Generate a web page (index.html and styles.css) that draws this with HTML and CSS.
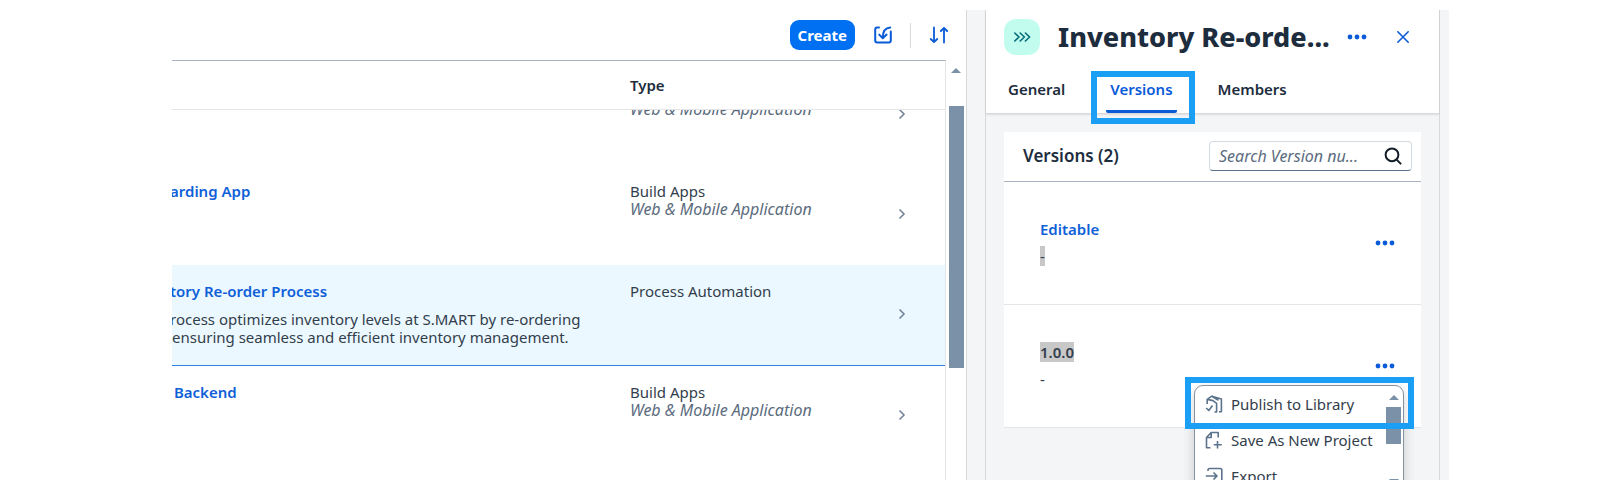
FILE: index.html
```
<!DOCTYPE html>
<html lang="en">
<head>
<meta charset="utf-8">
<title>Lobby</title>
<link rel="stylesheet" href="styles.css">
</head>
<body>
<main class="stage">
  <section class="projects">
    <div class="toolbar">
      <button class="create" type="button">Create</button>
      <button class="icon-button" type="button" aria-label="Import">
        <svg width="18" height="18" viewBox="0 0 18 18" fill="none" stroke="currentColor" stroke-width="2" stroke-linecap="round" stroke-linejoin="round"><path d="M5 1.5H3.2Q1.2 1.5 1.2 3.5V14.5Q1.2 16.5 3.2 16.5H14.8Q16.8 16.5 16.8 14.5V5.5"/><path d="M16.2 1.5Q8.8 2 8.8 11.8M5.2 8.6L8.8 12.2L12.6 8.6"/></svg>
      </button>
      <span class="separator"></span>
      <button class="icon-button" type="button" aria-label="Sort">
        <svg width="20" height="18" viewBox="0 0 20 18" fill="none" stroke="currentColor" stroke-width="1.8" stroke-linecap="round" stroke-linejoin="round"><path d="M5 1.5V16M1.8 13L5 16.2L8.2 13M15 16.5V2M11.8 5L15 1.8L18.2 5"/></svg>
      </button>
    </div>
    <div class="table-area">
      <div class="table-view">
        <table class="table">
          <colgroup><col><col class="col-type"><col class="col-nav"></colgroup>
          <thead>
            <tr><th></th><th>Type</th><th></th></tr>
          </thead>
          <tbody>
            <tr>
              <td></td>
              <td><div class="clip"><div class="cell scrolled">Build Apps<br><i>Web &amp; Mobile Application</i></div></div></td>
              <td><div class="clip"><div class="nav scrolled"><svg class="chevron" viewBox="0 0 8 12"><path d="M1.5 1.5L6 6L1.5 10.5"/></svg></div></div></td>
            </tr>
            <tr>
              <td><div class="cell name"><a href="#">arding App</a></div></td>
              <td><div class="cell">Build Apps<br><i>Web &amp; Mobile Application</i></div></td>
              <td><div class="nav"><svg class="chevron" viewBox="0 0 8 12"><path d="M1.5 1.5L6 6L1.5 10.5"/></svg></div></td>
            </tr>
            <tr class="selected">
              <td><div class="cell name"><a href="#">tory Re-order Process</a><p>rocess optimizes inventory levels at S.MART by re-ordering<br>ensuring seamless and efficient inventory management.</p></div></td>
              <td><div class="cell">Process Automation</div></td>
              <td><div class="nav"><svg class="chevron" viewBox="0 0 8 12"><path d="M1.5 1.5L6 6L1.5 10.5"/></svg></div></td>
            </tr>
            <tr>
              <td><div class="cell name"><a href="#">&nbsp;Backend</a></div></td>
              <td><div class="cell">Build Apps<br><i>Web &amp; Mobile Application</i></div></td>
              <td><div class="nav"><svg class="chevron" viewBox="0 0 8 12"><path d="M1.5 1.5L6 6L1.5 10.5"/></svg></div></td>
            </tr>
          </tbody>
        </table>
      </div>
      <div class="scrollbar">
        <span class="arrow-up"></span>
        <span class="thumb"></span>
      </div>
    </div>
  </section>

  <aside class="details">
    <header class="details-head">
      <div class="title-row">
        <span class="badge">
          <svg width="18" height="12" viewBox="0 0 18 12" fill="none" stroke="currentColor" stroke-width="1.6" stroke-linecap="round" stroke-linejoin="round"><path d="M1.8 2L6 6L1.8 10M7.2 2L11.4 6L7.2 10M12.4 2L16.6 6L12.4 10"/></svg>
        </span>
        <h1>Inventory Re-orde...</h1>
        <button class="icon-button more" type="button" aria-label="More"><svg width="20" height="6" viewBox="0 0 20 6" fill="currentColor"><circle cx="3" cy="3" r="2.4"/><circle cx="10" cy="3" r="2.4"/><circle cx="17" cy="3" r="2.4"/></svg></button>
        <button class="icon-button close" type="button" aria-label="Close"><svg width="14" height="14" viewBox="0 0 14 14" fill="none" stroke="currentColor" stroke-width="1.6" stroke-linecap="round"><path d="M1.8 1.8L12.2 12.2M12.2 1.8L1.8 12.2"/></svg></button>
      </div>
      <nav class="tabs">
        <a class="tab" href="#">General</a>
        <a class="tab active" href="#">Versions<span class="marker marker-tab"></span></a>
        <a class="tab" href="#">Members</a>
      </nav>
    </header>
    <div class="card">
      <div class="card-head">
        <h2>Versions (2)</h2>
        <label class="search">
          <input type="text" aria-label="Search versions" placeholder="Search Version nu...">
          <svg width="18" height="18" viewBox="0 0 18 18" fill="none" stroke="currentColor" stroke-width="2" stroke-linecap="round"><circle cx="8" cy="7.8" r="6.4"/><path d="M12.6 12.6L16.6 16.6"/></svg>
        </label>
      </div>
      <ul class="versions">
        <li class="version">
          <div class="version-text"><a href="#">Editable</a><span><mark>-</mark></span></div>
          <button class="icon-button" type="button" aria-label="More"><svg width="20" height="6" viewBox="0 0 20 6" fill="currentColor"><circle cx="3" cy="3" r="2.4"/><circle cx="10" cy="3" r="2.4"/><circle cx="17" cy="3" r="2.4"/></svg></button>
        </li>
        <li class="version">
          <div class="version-text"><strong><mark>1.0.0</mark></strong><span>-</span></div>
          <button class="icon-button" type="button" aria-label="More"><svg width="20" height="6" viewBox="0 0 20 6" fill="currentColor"><circle cx="3" cy="3" r="2.4"/><circle cx="10" cy="3" r="2.4"/><circle cx="17" cy="3" r="2.4"/></svg></button>
          <div class="menu">
            <div class="menu-items">
              <button type="button"><svg viewBox="0 0 18 18"><path d="M2.2 9V4.4L6.8 1.2L16.4 4V16.8H14M2.2 4.4L8 5.6L11.6 8.4V17H9.5M6.8 1.2L13.5 5.2M1.2 13L3.8 15.5L7.5 10.5"/></svg>Publish to Library</button>
              <button type="button"><svg viewBox="0 0 18 18"><path d="M5.5 16.8H1.5V6.5L6.2 1.5H13.2V6.5M1.8 6.5H6.2V1.8M12.5 10V17.5M8.8 13.8H16.8"/></svg>Save As New Project</button>
              <button type="button"><svg viewBox="0 0 18 18"><path d="M3 4V3Q3 1.5 4.5 1.5H15Q16.8 1.5 16.8 3V15Q16.8 16.5 15 16.5H4.5Q3 16.5 3 15V14M.8 9H12M8.5 5.5L12 9L8.5 12.5"/></svg>Export</button>
            </div>
            <div class="menu-scroll"><span class="arrow-up"></span><span class="menu-thumb"></span><span class="arrow-down"></span></div>
          </div>
          <span class="marker marker-menu"></span>
        </li>
      </ul>
    </div>
  </aside>
</main>
</body>
</html>
```
FILE: styles.css
```
* { box-sizing: border-box; }

body {
  margin: 0;
  padding: 10px 151px 10px 172px;
  background: #fff;
  color: #333e4c;
  font: 15px/18px "Noto Sans", "Open Sans", sans-serif;
}

button { font: inherit; cursor: pointer; }
a { color: #0f5fd8; font-weight: 600; text-decoration: none; }
h1, h2, p, ul { margin: 0; padding: 0; }
mark { background: #c8c8c8; color: inherit; }

.stage {
  display: flex;
  height: calc(100vh - 20px);
  background: #f4f5f7;
  overflow: hidden;
}

.projects {
  flex: 1;
  min-width: 0;
  display: flex;
  flex-direction: column;
  background: #fff;
  border-right: 1px solid #d9d9d9;
}

.toolbar {
  display: flex;
  align-items: center;
  justify-content: flex-end;
  height: 50px;
  padding-right: 17px;
}

.create {
  height: 30px;
  padding: 0 8px;
  border: 0;
  border-radius: 9px;
  background: #0070f2;
  color: #fff;
  font-weight: 700;
}

.icon-button {
  display: flex;
  padding: 0;
  border: 0;
  background: none;
  color: #0a5bd8;
}

.toolbar .icon-button:nth-of-type(2) { margin-left: 19px; }
.separator { width: 1px; height: 25px; margin: 0 18px; background: #d9d9d9; }

.table-area { display: flex; flex: 1; min-height: 0; }

.table-view {
  flex: 1;
  border-top: 1px solid #a8b3c3;
  border-right: 1px solid #e5e5e5;
  overflow: hidden;
}

.table {
  width: 100%;
  table-layout: fixed;
  border-collapse: separate;
  border-spacing: 0;
}

.col-type { width: 229px; }
.col-nav { width: 86px; }

.table th {
  height: 49px;
  padding: 0;
  border-bottom: 1px solid #e5e5e5;
  color: #1d2d3e;
  font-weight: 600;
  text-align: left;
}

.table td { padding: 0; vertical-align: top; }
.cell { height: 100px; padding-top: 17px; white-space: nowrap; overflow: hidden; }
.cell i { color: #5b6b7d; font-size: 16px; }
.name { text-indent: -2px; }
.name p { margin-top: 10px; }
.clip { height: 55px; overflow: hidden; }
.scrolled { margin-top: -45px; }
.nav { display: flex; align-items: center; justify-content: center; height: 98px; }
.chevron { width: 8px; height: 12px; fill: none; stroke: #75859a; stroke-width: 1.6; }
.selected { background: #ebf8ff; }
.selected td { border-bottom: 1px solid #2f80e0; }

.scrollbar { width: 20px; display: flex; flex-direction: column; align-items: center; padding-top: 8px; }
.arrow-up { width: 0; height: 0; border: 5px solid transparent; border-top: 0; border-bottom-color: #7b91a8; }
.arrow-down { width: 0; height: 0; border: 5px solid transparent; border-bottom: 0; border-top-color: #7b91a8; }
.thumb { width: 15px; height: 262px; margin-top: 33px; background: #7b91a8; }

.details {
  width: 455px;
  margin: 0 9px 0 18px;
  border: solid #d9d9d9;
  border-width: 0 1px;
}

.details-head {
  background: #fff;
  border-bottom: 1px solid #d9d9d9;
  box-shadow: 0 1px 2px #0000001a;
}

.title-row { display: flex; align-items: center; height: 54px; padding: 0 29px 0 18px; }

.badge {
  display: flex;
  align-items: center;
  justify-content: center;
  width: 36px;
  height: 36px;
  border-radius: 12px;
  background: #c2fcee;
  color: #046c7a;
}

h1 { flex: 1; margin-left: 18px; color: #1d2d3e; font-size: 27px; font-weight: 800; line-height: 36px; white-space: nowrap; }
.close { margin-left: 29px; }

.tabs { display: flex; gap: 37px; height: 49px; padding: 0 18px; }

.tab {
  position: relative;
  padding: 16px 4px 0;
  color: #1d2d3e;
  border-bottom: 3px solid transparent;
}

.tab.active { color: #0a5bd8; border-color: #0a5bd8; border-radius: 2px; }

.marker { position: absolute; border: 6px solid #1a9ff5; pointer-events: none; }
.marker-tab { inset: 7px -18px -14px -15px; }
.marker-menu { top: 72px; right: 7px; width: 229px; height: 52px; }

.card { margin: 18px; background: #fff; }

.card-head {
  display: flex;
  align-items: center;
  justify-content: space-between;
  height: 50px;
  padding: 0 9px 2px 19px;
  border-bottom: 1px solid #a8b3c3;
}

h2 { color: #1d2d3e; font-size: 17px; font-weight: 600; }

.search {
  display: flex;
  align-items: center;
  width: 203px;
  height: 30px;
  padding: 0 9px;
  border: 1px solid #d5dbe2;
  border-bottom-color: #5b738b;
  border-radius: 4px;
  color: #131e29;
}

.search input { flex: 1; min-width: 0; padding: 0; border: 0; outline: 0; background: none; font: inherit; font-size: 16px; }
.search input::placeholder { color: #5b6b7d; font-style: italic; opacity: 1; }

.versions { list-style: none; }

.version {
  position: relative;
  display: flex;
  align-items: center;
  justify-content: space-between;
  height: 123px;
  padding: 0 26px 0 36px;
  border-bottom: 1px solid #e5e5e5;
}

.version-text { display: flex; flex-direction: column; gap: 9px; padding-bottom: 2px; }
.version-text strong { font-weight: 600; }

.menu {
  position: absolute;
  top: 80px;
  right: 17px;
  display: flex;
  justify-content: space-between;
  width: 210px;
  height: 112px;
  border: 1px solid #8592a2;
  border-radius: 9px;
  background: #fff;
  box-shadow: 0 4px 12px #0000002e;
}

.menu-items button {
  display: flex;
  align-items: center;
  gap: 8px;
  height: 36px;
  padding: 0 0 0 10px;
  border: 0;
  background: none;
  color: #333e4c;
  white-space: nowrap;
}

.menu-items svg { width: 18px; height: 18px; fill: none; stroke: #5b738b; stroke-width: 1.6; stroke-linejoin: round; }
.menu-scroll { display: flex; flex-direction: column; align-items: center; width: 15px; margin-right: 2px; padding-top: 9px; }
.menu-thumb { width: 15px; height: 37px; margin: 7px 0 35px; background: #7b91a8; }
```
